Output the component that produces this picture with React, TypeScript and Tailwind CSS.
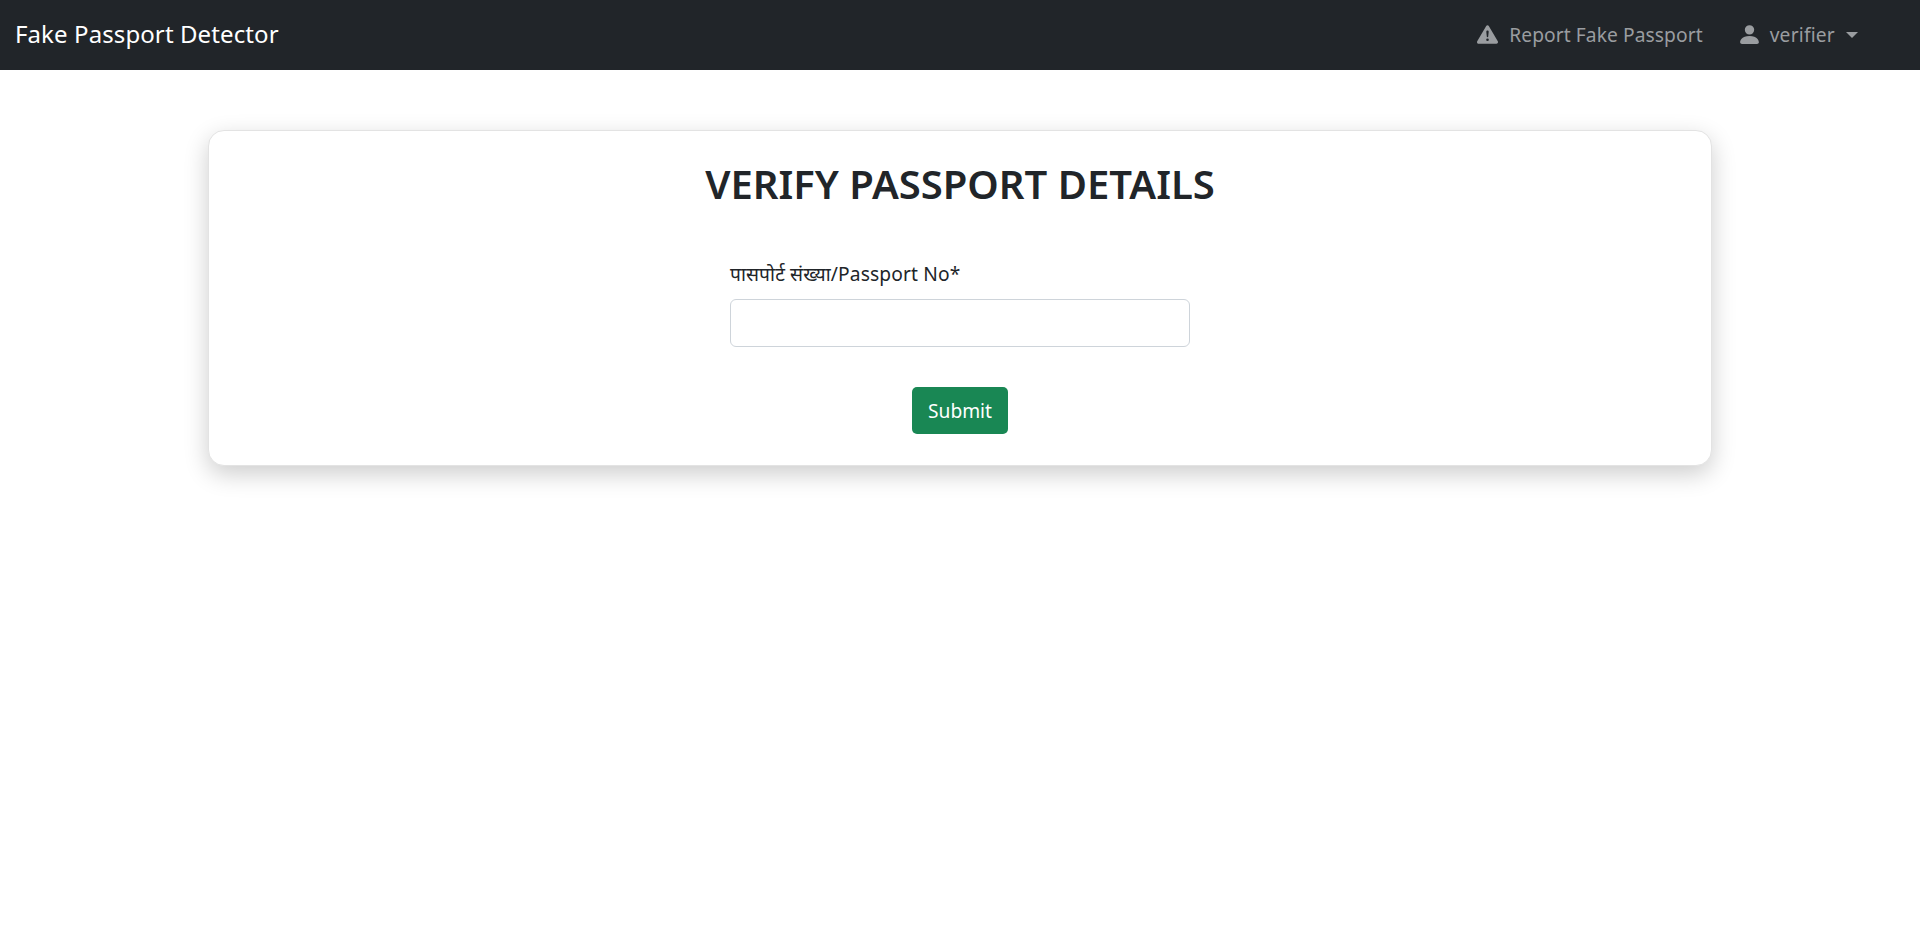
import { BsExclamationTriangleFill, BsPersonFill } from "react-icons/bs";

export default function App() {
  return (
    <div className="min-h-[945px] bg-white font-['Noto_Sans','Open_Sans','Noto_Sans_CJK_SC',sans-serif] text-[#212529]">
      <nav className="flex h-[70px] items-center justify-between bg-[#212529] pl-[15px] pr-[62px]">
        <a className="mb-[2px] text-[24px] tracking-[0.1px] text-white">Fake Passport Detector</a>
        <div className="flex items-center text-[19.2px] text-[#9a9da0]">
          <a className="flex items-center tracking-[0.08px]">
            <BsExclamationTriangleFill className="mr-[11px] size-[21px]" />
            Report Fake Passport
          </a>
          <a className="ml-[34px] flex items-center tracking-[0.2px]">
            <BsPersonFill className="mr-[8px] size-[25px]" />
            verifier
            <span className="ml-[11px] h-0 w-0 border-x-[6px] border-t-[6px] border-x-transparent border-t-[#9a9da0]" />
          </a>
        </div>
      </nav>
      <main className="px-[208px] pt-[60px]">
        <div className="flex flex-col items-center rounded-[16px] border border-[#e3e3e3] bg-white pb-[31px] pt-[26px] shadow-[0_8px_24px_rgba(0,0,0,0.2)]">
          <h1 className="text-[40px] font-semibold leading-[54px]">VERIFY PASSPORT DETAILS</h1>
          <div className="mt-[49px] w-[460px]">
            <label className="block text-[19.2px] leading-[28px] tracking-[0.14px]">पासपोर्ट संख्या/Passport No*</label>
            <input className="mt-[11px] block h-[48px] w-full rounded-[6px] border border-[#ced4da] bg-white" />
          </div>
          <button className="mt-[40px] h-[47px] w-[96px] rounded-[5px] bg-[#198754] pt-[1px] text-[19.2px] text-white">Submit</button>
        </div>
      </main>
    </div>
  );
}
